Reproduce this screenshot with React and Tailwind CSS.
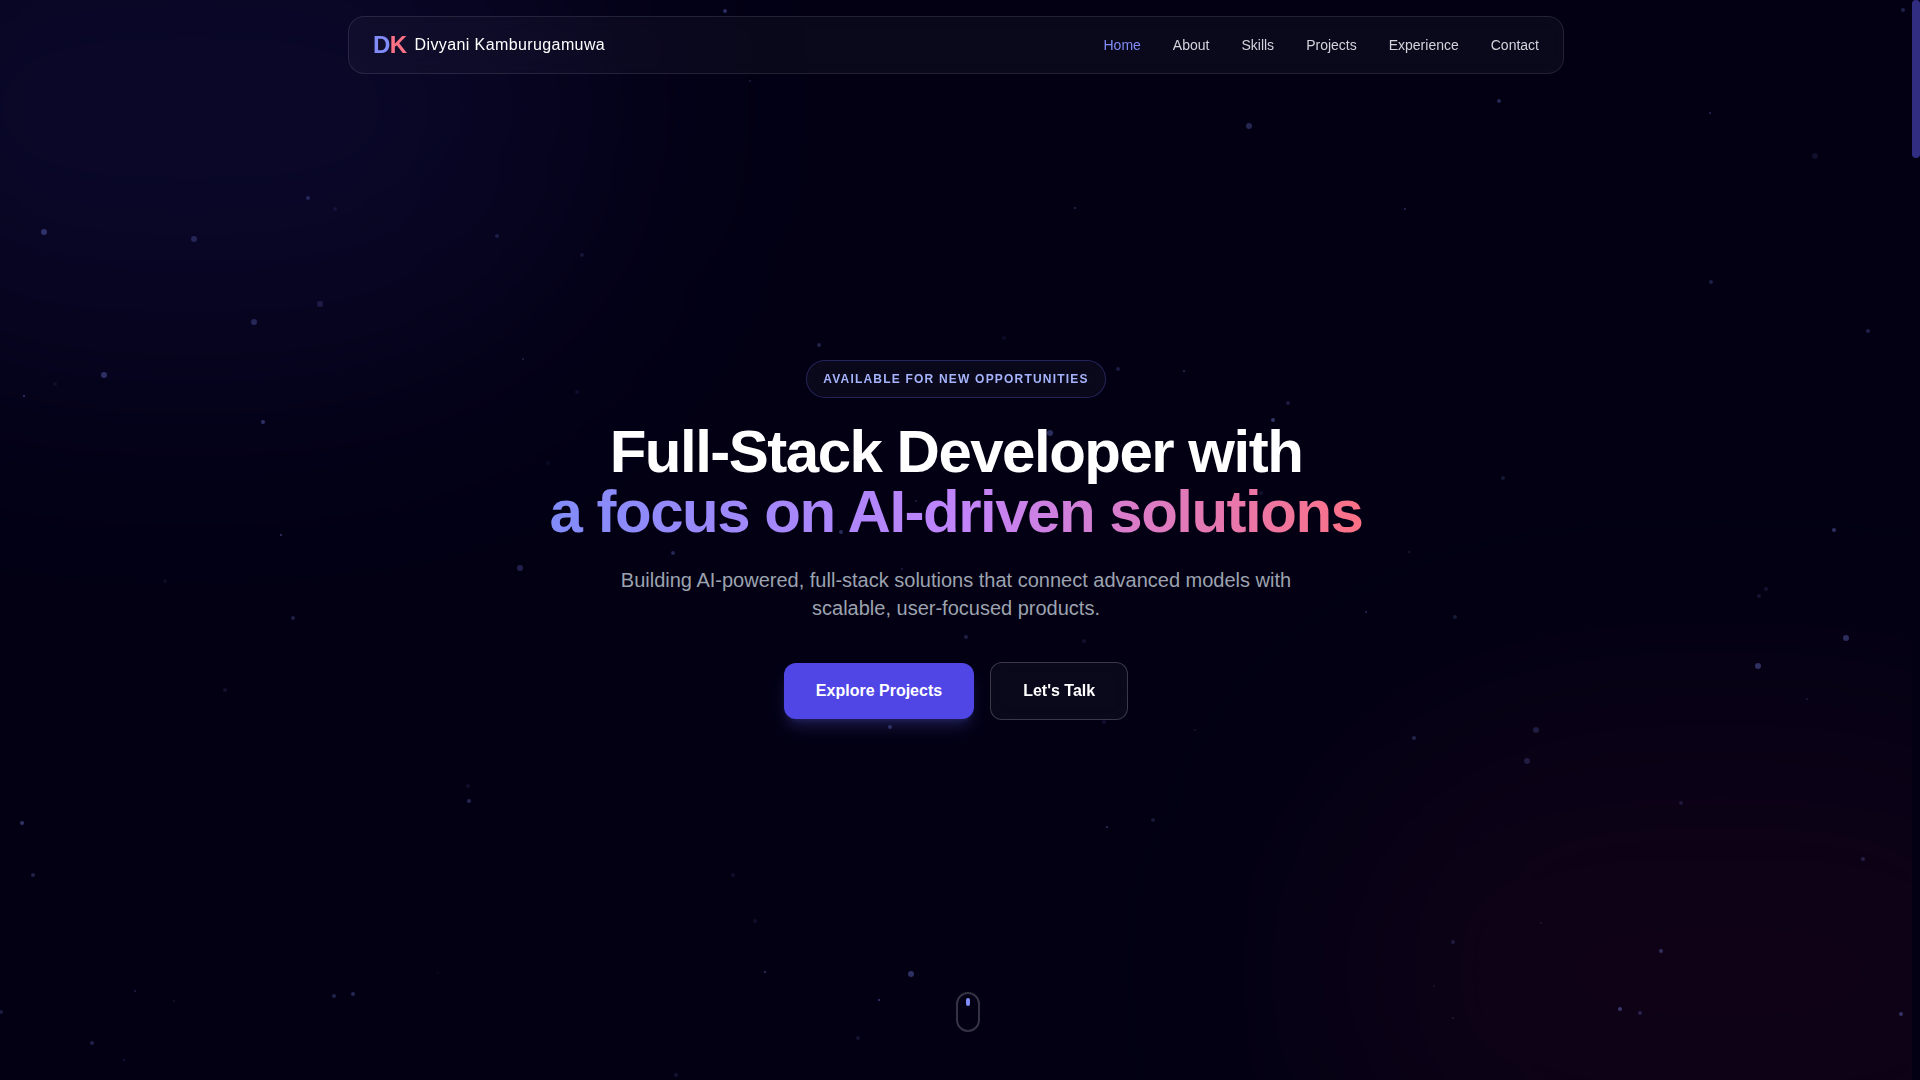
const links = ['Home', 'About', 'Skills', 'Projects', 'Experience', 'Contact'];

// Star field: [x, y, radius, opacity]
const particles = [
  [725, 11, 2, 0.32], [308, 198, 2, 0.25], [335, 209, 2, 0.1], [44, 232, 3, 0.32], [194, 239, 3, 0.24],
  [497, 236, 2, 0.18], [582, 255, 2, 0.14], [320, 304, 3, 0.18], [254, 322, 3, 0.26], [523, 359, 1, 0.25],
  [104, 375, 3, 0.32], [55, 384, 2, 0.08], [24, 396, 1, 0.4], [577, 392, 2, 0.1], [263, 422, 2, 0.34],
  [548, 463, 2, 0.07], [281, 535, 1, 0.4], [750, 81, 1, 0.2], [1409, 552, 1, 0.2], [1366, 612, 1, 0.3],
  [1455, 617, 2, 0.18], [1766, 589, 2, 0.12], [1759, 596, 2, 0.14], [1846, 638, 3, 0.32], [1758, 666, 3, 0.34],
  [1807, 699, 1, 0.2], [1536, 730, 3, 0.2], [1414, 738, 2, 0.26], [1527, 761, 3, 0.2], [1195, 730, 1, 0.15],
  [1681, 803, 2, 0.16], [1153, 820, 2, 0.16], [1107, 827, 1, 0.35], [1863, 859, 2, 0.22], [1541, 923, 1, 0.15],
  [1453, 942, 2, 0.18], [1661, 951, 2, 0.32], [1434, 986, 1, 0.15], [1453, 1018, 1, 0.18], [1620, 1009, 2, 0.38],
  [1640, 1013, 2, 0.24], [1901, 1014, 2, 0.35], [673, 553, 2, 0.28], [520, 568, 3, 0.24], [165, 581, 2, 0.08],
  [293, 618, 2, 0.22], [225, 690, 2, 0.12], [890, 727, 2, 0.3], [468, 786, 2, 0.1], [469, 801, 2, 0.28],
  [22, 823, 2, 0.36], [33, 875, 2, 0.24], [733, 875, 2, 0.1], [755, 921, 2, 0.1], [765, 972, 1, 0.4],
  [911, 974, 3, 0.34], [438, 973, 1, 0.08], [135, 991, 1, 0.22], [174, 1001, 1, 0.12], [334, 996, 2, 0.25],
  [353, 994, 2, 0.28], [879, 1000, 1, 0.4], [1, 1012, 2, 0.2], [92, 1043, 2, 0.24], [124, 1060, 1, 0.18],
  [858, 1038, 2, 0.13], [676, 1075, 2, 0.12], [902, 569, 1, 0.24], [1249, 126, 3, 0.28], [1499, 101, 2, 0.28],
  [1710, 113, 1, 0.3], [1815, 156, 3, 0.11], [1405, 209, 1, 0.3], [1711, 282, 2, 0.22], [1868, 331, 2, 0.24],
  [1903, 10, 2, 0.24], [1118, 369, 2, 0.2], [1184, 371, 1, 0.3], [1288, 403, 2, 0.2], [1273, 420, 2, 0.36],
  [1503, 478, 2, 0.16], [1834, 530, 2, 0.34], [1261, 493, 2, 0.12], [819, 345, 2, 0.25], [1075, 208, 1, 0.3],
  [1004, 338, 2, 0.07], [1050, 433, 3, 0.32], [841, 532, 2, 0.3], [916, 501, 1, 0.24], [966, 637, 2, 0.22],
  [1084, 641, 2, 0.12], [1104, 722, 2, 0.12],
];

function Backdrop() {
  return (
    <div aria-hidden="true" className="absolute inset-0 overflow-hidden">
      <div className="absolute top-[-13%] left-[-11%] h-[46%] w-[42%] rounded-full bg-[#4f46e5]/10 blur-[120px]" />
      <div className="absolute right-[-11%] bottom-[-13%] h-[46%] w-[42%] rounded-full bg-[#e11d48]/6 blur-[120px]" />
      <svg className="absolute inset-0 h-full w-full" viewBox="0 0 1912 1080" preserveAspectRatio="xMidYMid slice">
        {particles.map(([x, y, r, o]) => (
          <circle key={`${x}-${y}`} cx={x} cy={y} r={r} fill="#818cf8" opacity={o} />
        ))}
      </svg>
    </div>
  );
}

function Navbar() {
  return (
    <header className="fixed inset-x-0 top-4 z-10 pr-2">
      <nav className="mx-auto flex max-w-[1216px] items-center justify-between rounded-2xl border border-white/10 bg-white/[0.03] px-6 py-3 backdrop-blur-md">
        <a href="#home" className="flex items-center gap-2">
          <span className="text-2xl font-bold tracking-tight text-[#818cf8]">
            D<span className="text-[#fb7185]">K</span>
          </span>
          <span className="tracking-wide text-white">Divyani Kamburugamuwa</span>
        </a>
        <ul className="flex items-center gap-8 text-sm">
          {links.map((label) => (
            <li key={label}>
              <a
                href={`#${label.toLowerCase()}`}
                className={label === 'Home' ? 'text-[#818cf8]' : 'text-[#d1d5db]'}
              >
                {label}
              </a>
            </li>
          ))}
        </ul>
      </nav>
    </header>
  );
}

function Hero() {
  return (
    <section id="home" className="relative grid min-h-screen grid-rows-[1fr_auto_1fr]">
      <div className="row-start-2 flex flex-col items-center px-6 text-center">
        <span className="mb-6 rounded-full border border-[#6366f1]/30 bg-white/[0.03] px-4 py-2 text-xs leading-5 font-semibold tracking-widest text-[#a5b4fc] uppercase backdrop-blur-md">
          Available for new opportunities
        </span>
        <h1 className="mb-6 text-6xl leading-none font-bold tracking-tight text-white">
          Full-Stack Developer with
          <br />
          <span className="bg-linear-to-r/srgb from-[#818cf8] via-[#c084fc] to-[#fb7185] bg-clip-text text-transparent">
            a focus on AI-driven solutions
          </span>
        </h1>
        <p className="mb-10 max-w-2xl text-xl text-[#9ca3af]">
          Building AI-powered, full-stack solutions that connect advanced models with scalable, user-focused products.
        </p>
        <div className="flex items-center gap-4">
          <button
            type="button"
            className="rounded-xl bg-[#4f46e5] px-8 py-4 font-semibold text-white shadow-lg shadow-[#6366f1]/25"
          >
            Explore Projects
          </button>
          <button
            type="button"
            className="rounded-xl border border-white/20 bg-white/[0.03] px-8 py-4 font-semibold text-white backdrop-blur-md"
          >
            Let&apos;s Talk
          </button>
        </div>
      </div>
      <div className="row-start-3 mb-12 ml-[50%] flex h-10 w-6 justify-center self-end rounded-full border-2 border-white/20 pt-1">
        <div className="h-2 w-1 rounded-full bg-[#818cf8]" />
      </div>
    </section>
  );
}

export default function App() {
  return (
    <div className="flex min-h-screen bg-[#030014] font-['Liberation_Sans',Arial,sans-serif]">
      <main className="relative min-w-0 flex-1">
        <Backdrop />
        <Navbar />
        <Hero />
      </main>
      <div aria-hidden="true" className="w-2">
        <div className="h-[158px] rounded-full bg-[#312e81]" />
      </div>
    </div>
  );
}
